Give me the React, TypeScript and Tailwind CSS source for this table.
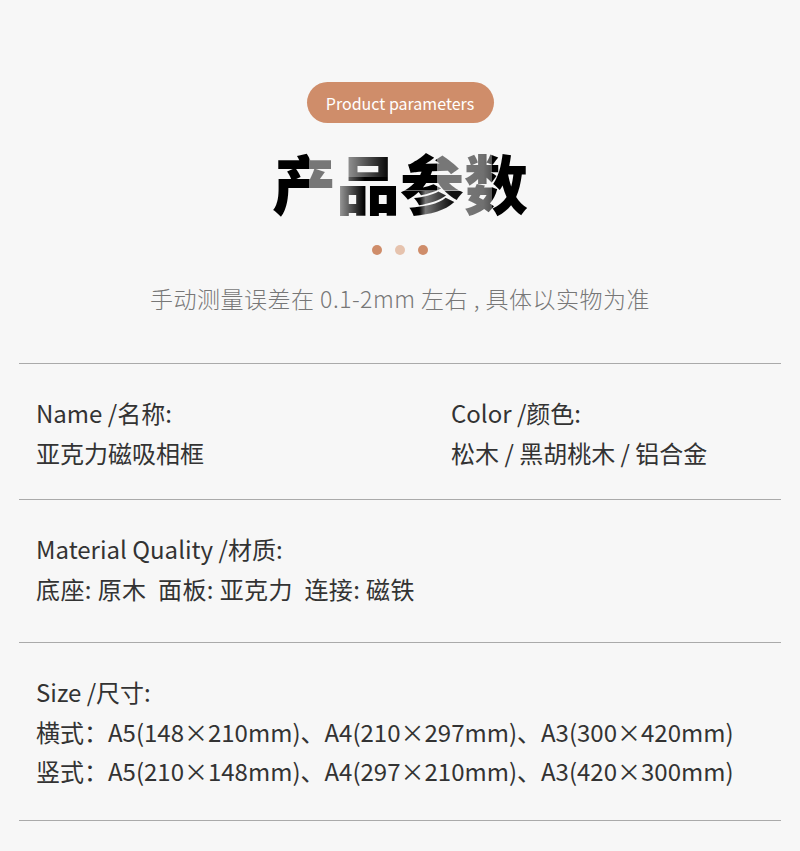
import React from "react";

const font = { fontFamily: '"Noto Sans CJK SC", "Noto Sans", sans-serif' };

export default function App() {
  return (
    <div className="w-[800px] h-[851px] bg-[#f7f7f7] text-[#333]" style={font}>
      <div className="flex flex-col items-center pt-[82px]">
        <div className="h-[41px] w-[187px] rounded-full bg-[#cf8d6a] text-white text-[16px] flex items-center justify-center">
          Product parameters
        </div>
        <div className="mt-[18px] flex text-[64px] leading-[80px] font-black">
          <span className="block bg-[linear-gradient(90deg,#000_0%,#000_58%,#777_58%,#777_100%)] bg-clip-text text-transparent">产</span>
          <span className="block bg-[image:linear-gradient(90deg,#999_15%,#000_85%),linear-gradient(90deg,#999_5%,#000_45%,#000_100%)] bg-[length:100%_45%,100%_55%] bg-[position:top,bottom] bg-no-repeat bg-clip-text text-transparent">品</span>
          <span className="block bg-[image:linear-gradient(90deg,#000_0%,#000_58%,#777_58%,#777_100%),linear-gradient(90deg,#000_0%,#000_30%,#777_40%,#111_80%)] bg-[length:100%_62%,100%_38%] bg-[position:top,bottom] bg-no-repeat bg-clip-text text-transparent">参</span>
          <span className="block bg-[linear-gradient(90deg,#777_0%,#707070_30%,#555_44%,#000_44%,#000_100%)] bg-clip-text text-transparent">数</span>
        </div>
        <div className="mt-[24px] flex gap-[13px]">
          <div className="w-[10px] h-[10px] rounded-full bg-[#cf8d6a]" />
          <div className="w-[10px] h-[10px] rounded-full bg-[#e6c3ae]" />
          <div className="w-[10px] h-[10px] rounded-full bg-[#cf8d6a]" />
        </div>
        <div className="mt-[28px] text-[23px] leading-[30px] font-light tracking-[0.5px] text-[#777]">
          手动测量误差在 0.1-2mm 左右 , 具体以实物为准
        </div>
      </div>

      <div className="mx-[19px] mt-[50px] border-t border-[#aaa]">
        <div className="grid grid-cols-[415px_1fr] pl-[17px] pt-[29px] pb-[26px] text-[24px] leading-[40px]">
          <div>
            <div>Name /名称:</div>
            <div>亚克力磁吸相框</div>
          </div>
          <div>
            <div>Color /颜色:</div>
            <div>松木 / 黑胡桃木 / 铝合金</div>
          </div>
        </div>
        <div className="border-t border-[#aaa] pl-[17px] pt-[29px] pb-[33px] text-[24px] leading-[40px]">
          <div>Material Quality /材质:</div>
          <div className="tracking-[0.4px]">底座: 原木&nbsp; 面板: 亚克力&nbsp; 连接: 磁铁</div>
        </div>
        <div className="border-t border-[#aaa] pl-[17px] pt-[29px] pb-[30px] text-[24px] leading-[40px]">
          <div>Size /尺寸:</div>
          <div className="leading-[40px]">横式：A5(148×210mm)、A4(210×297mm)、A3(300×420mm)</div>
          <div className="leading-[38px]">竖式：A5(210×148mm)、A4(297×210mm)、A3(420×300mm)</div>
        </div>
        <div className="border-t border-[#aaa]" />
      </div>
    </div>
  );
}
